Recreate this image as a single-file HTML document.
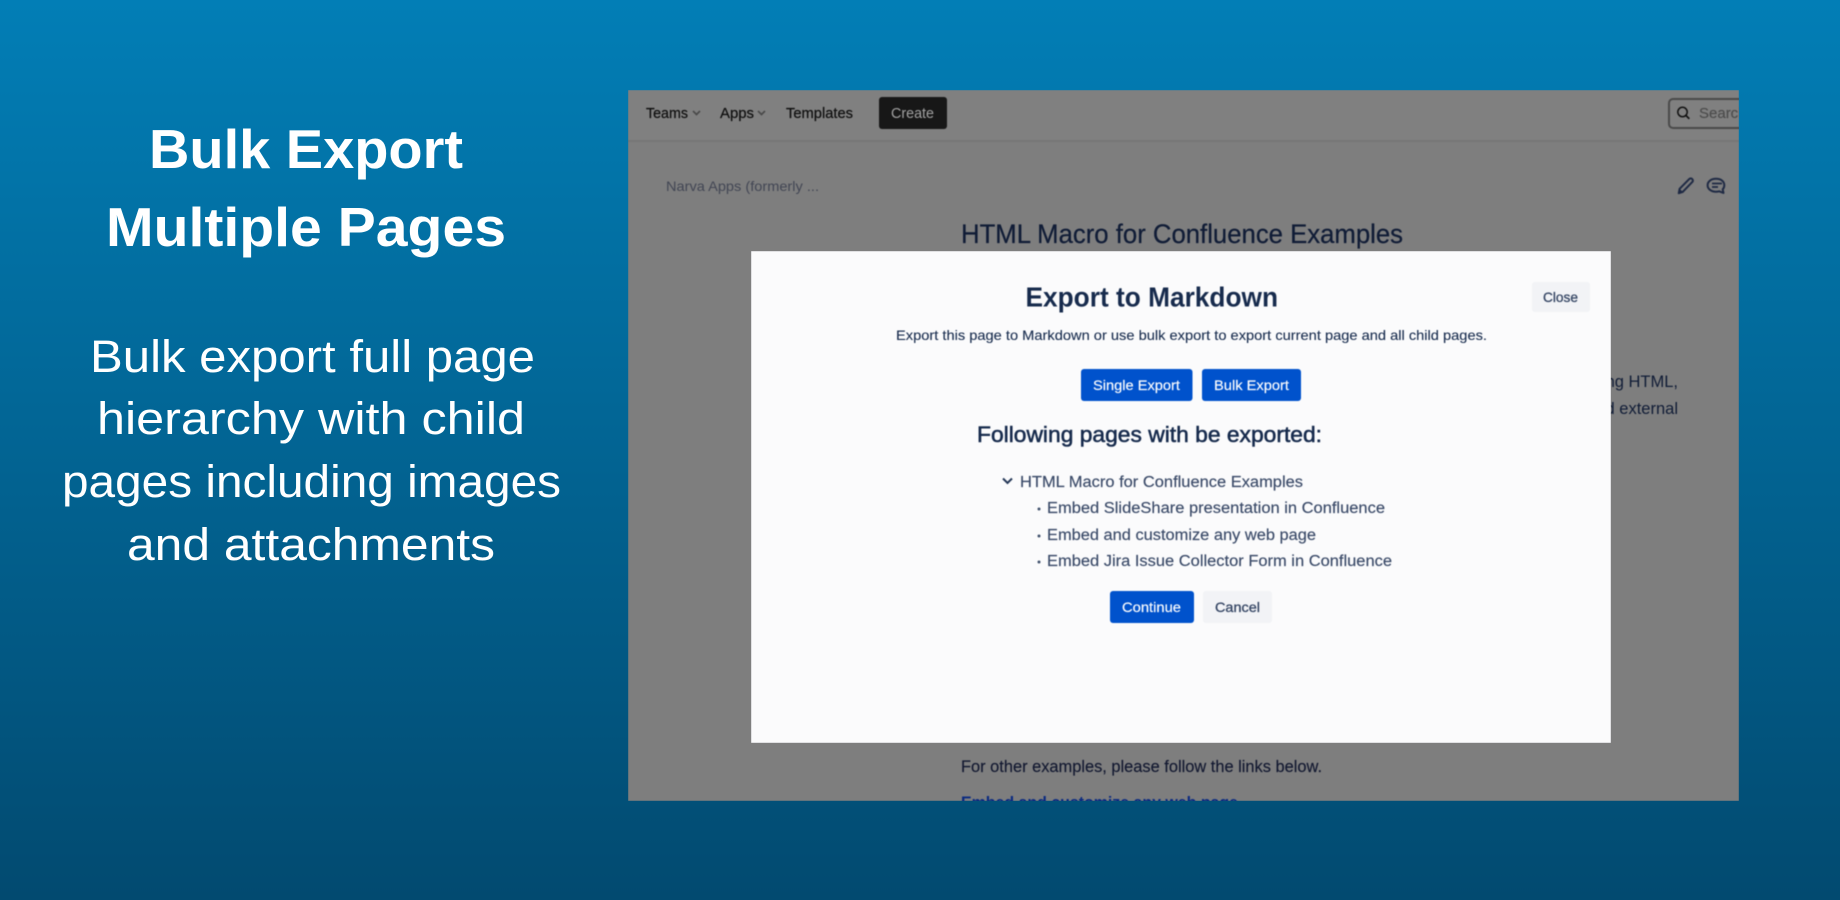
<!DOCTYPE html>
<html>
<head>
<meta charset="utf-8">
<title>Bulk Export Multiple Pages</title>
<style>
html,body{margin:0;padding:0;width:1840px;height:900px;overflow:hidden;background:#025f8c}
svg{display:block;position:absolute;left:0;top:0}
text{font-family:"Liberation Sans",sans-serif}
</style>
</head>
<body>
<svg width="1840" height="900" viewBox="0 0 1840 900" xmlns="http://www.w3.org/2000/svg">
<defs>
<linearGradient id="bg" x1="0" y1="0" x2="0" y2="1">
<stop offset="0" stop-color="#027eb6"/>
<stop offset="1" stop-color="#024a70"/>
</linearGradient>
<clipPath id="shot"><rect x="628" y="90" width="1111" height="711"/></clipPath>
<filter id="soft" x="0" y="0" width="100%" height="100%" color-interpolation-filters="sRGB"><feGaussianBlur stdDeviation="0.4"/></filter>
</defs>
<rect width="1840" height="900" fill="url(#bg)"/>

<g fill="#fff" font-weight="bold" font-size="55">
<text x="149" y="168" textLength="314" lengthAdjust="spacingAndGlyphs">Bulk Export</text>
<text x="106" y="246" textLength="400" lengthAdjust="spacingAndGlyphs">Multiple Pages</text>
</g>
<g fill="#fff" font-size="45">
<text x="90" y="372" textLength="445" lengthAdjust="spacingAndGlyphs">Bulk export full page</text>
<text x="97" y="434" textLength="428" lengthAdjust="spacingAndGlyphs">hierarchy with child</text>
<text x="62" y="497" textLength="499" lengthAdjust="spacingAndGlyphs">pages including images</text>
<text x="127" y="560" textLength="368" lengthAdjust="spacingAndGlyphs">and attachments</text>
</g>

<g clip-path="url(#shot)">
<g filter="url(#soft)">
<rect x="628" y="90" width="1111" height="711" fill="#7e7e7e"/>
<rect x="628" y="90" width="1111" height="51" fill="#808080"/>
<rect x="628" y="140" width="1111" height="2" fill="#767676"/>

<g font-size="14.5" fill="#0e0e0e" stroke="#0e0e0e" stroke-width="0.2">
<text x="646" y="118" textLength="42" lengthAdjust="spacingAndGlyphs">Teams</text>
<text x="720" y="118" textLength="34" lengthAdjust="spacingAndGlyphs">Apps</text>
<text x="786" y="118" textLength="67" lengthAdjust="spacingAndGlyphs">Templates</text>
</g>
<path d="M693 111l3.5 3.5 3.5-3.5M758 111l3.500 3.500 3.500-3.500" fill="none" stroke="#4a4a4a" stroke-width="1.700"/>
<rect x="879" y="97" width="68" height="32" rx="3" fill="#171717"/>
<text x="891" y="118" font-size="14.500" fill="#a3a3a3" textLength="43" lengthAdjust="spacingAndGlyphs">Create</text>

<rect x="1669" y="99" width="100" height="29" rx="4" fill="none" stroke="#4a4a4a" stroke-width="2"/>
<circle cx="1682.500" cy="112" r="4.700" fill="none" stroke="#111" stroke-width="1.500"/>
<path d="M1686 115.500l3.300 3.300" stroke="#111" stroke-width="1.700" fill="none"/>
<text x="1699" y="118" font-size="15" fill="#4c4c4c" stroke="#4c4c4c" stroke-width="0.150">Search</text>

<text x="666" y="191" font-size="14" fill="#424654" textLength="153" lengthAdjust="spacingAndGlyphs">Narva Apps (formerly ...</text>

<path d="M1678.800 193.200l.8-4.400 9.600-9.700c.9-.9 2.200-.9 3 0 .9.800.9 2.100 0 3l-9.500 9.800z" fill="none" stroke="#1f2a44" stroke-width="2" stroke-linejoin="round"/>
<path d="M1677.800 194l1.300-5.800 4.500 4.400z" fill="#1f2a44"/>
<path d="M1716 178.800c5.200 0 8.300 2.800 8.300 6.400 0 1.800-.7 3.200-1.600 4.100l.8 3.700-4.300-1.700c-1 .3-2 .4-3.200.4-5 0-8.400-2.900-8.400-6.500 0-3.600 3.400-6.400 8.400-6.400z" fill="none" stroke="#1f2a44" stroke-width="2" stroke-linejoin="round"/>
<path d="M1712 183.500h10M1712 187h6" stroke="#1f2a44" stroke-width="1.700" fill="none"/>

<text x="961" y="243" font-size="26.500" fill="#101c36" stroke="#101c36" stroke-width="0.250" textLength="442" lengthAdjust="spacingAndGlyphs">HTML Macro for Confluence Examples</text>
<text x="1678" y="387" font-size="16.500" fill="#101c36" text-anchor="end">ng HTML,</text>
<text x="1678" y="414" font-size="16.500" fill="#101c36" text-anchor="end">d external</text>
<text x="961" y="772" font-size="16.500" fill="#121830" stroke="#121830" stroke-width="0.150" textLength="361" lengthAdjust="spacingAndGlyphs">For other examples, please follow the links below.</text>
<text x="961" y="808" font-size="16.500" font-weight="bold" fill="#0a2a80" textLength="277" lengthAdjust="spacingAndGlyphs">Embed and customize any web page</text>
</g>
</g>

<g filter="url(#soft)">
<rect x="751" y="251" width="860" height="492" fill="#fbfbfc"/>
<text x="1025.500" y="306.500" font-size="28" font-weight="bold" fill="#172b4d" textLength="252.500" lengthAdjust="spacingAndGlyphs">Export to Markdown</text>
<rect x="1532" y="282" width="58" height="30" rx="3" fill="#f2f3f6"/>
<text x="1543" y="302" font-size="14" fill="#344563" textLength="35" lengthAdjust="spacingAndGlyphs" stroke="#344563" stroke-width="0.300">Close</text>
<text x="896" y="340" font-size="14" fill="#172b4d" stroke="#172b4d" stroke-width="0.100" textLength="591" lengthAdjust="spacingAndGlyphs">Export this page to Markdown or use bulk export to export current page and all child pages.</text>

<rect x="1081" y="369" width="111.500" height="32" rx="3" fill="#0052cc"/>
<text x="1093" y="390" font-size="14" fill="#fff" stroke="#fff" stroke-width="0.150" textLength="87" lengthAdjust="spacingAndGlyphs">Single Export</text>
<rect x="1202" y="369" width="99" height="32" rx="3" fill="#0052cc"/>
<text x="1214" y="390" font-size="14" fill="#fff" stroke="#fff" stroke-width="0.150" textLength="75" lengthAdjust="spacingAndGlyphs">Bulk Export</text>

<text x="977" y="442" font-size="22.500" fill="#172b4d" stroke="#172b4d" stroke-width="0.550" textLength="345" lengthAdjust="spacingAndGlyphs">Following pages with be exported:</text>

<path d="M1003 478.500l4.500 4.500 4.500-4.500" fill="none" stroke="#253858" stroke-width="2"/>
<g font-size="15.500" fill="#3a4a68" stroke="#3a4a68" stroke-width="0.150">
<text x="1020" y="487" textLength="283" lengthAdjust="spacingAndGlyphs">HTML Macro for Confluence Examples</text>
<text x="1047" y="513" textLength="338" lengthAdjust="spacingAndGlyphs">Embed SlideShare presentation in Confluence</text>
<text x="1047" y="540" textLength="269" lengthAdjust="spacingAndGlyphs">Embed and customize any web page</text>
<text x="1047" y="566" textLength="345" lengthAdjust="spacingAndGlyphs">Embed Jira Issue Collector Form in Confluence</text>
</g>
<circle cx="1039" cy="509" r="1.500" fill="#42526e"/>
<circle cx="1039" cy="536" r="1.500" fill="#42526e"/>
<circle cx="1039" cy="562" r="1.500" fill="#42526e"/>

<rect x="1110" y="591" width="84" height="32" rx="3" fill="#0052cc"/>
<text x="1122" y="612" font-size="14" fill="#fff" stroke="#fff" stroke-width="0.150" textLength="59" lengthAdjust="spacingAndGlyphs">Continue</text>
<rect x="1203" y="591" width="69" height="32" rx="3" fill="#f2f3f6"/>
<text x="1215" y="612" font-size="14" fill="#344563" stroke="#344563" stroke-width="0.300" textLength="45" lengthAdjust="spacingAndGlyphs">Cancel</text>
</g>
</svg>
</body>
</html>
